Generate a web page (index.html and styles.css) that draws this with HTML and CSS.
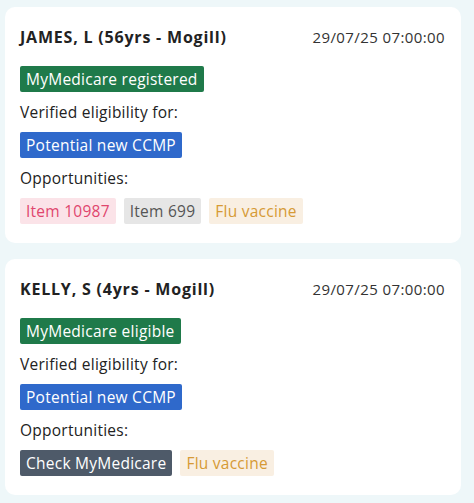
FILE: index.html
```html
<!DOCTYPE html>
<html lang="en">
<head>
    <meta charset="UTF-8">
    <meta name="viewport" content="width=device-width, initial-scale=1.0">
    <title>Patients</title>
    <link rel="stylesheet" href="styles.css">
</head>
<body>
    <div class="list">
        <div class="card">
            <div class="card-head">
                <span class="name">JAMES, L (56yrs - Mogill)</span>
                <span class="date">29/07/25 07:00:00</span>
            </div>
            <div class="tags">
                <span class="tag tag-green">MyMedicare registered</span>
            </div>
            <div class="label">Verified eligibility for:</div>
            <div class="tags">
                <span class="tag tag-blue">Potential new CCMP</span>
            </div>
            <div class="label">Opportunities:</div>
            <div class="tags">
                <span class="tag tag-pink">Item 10987</span>
                <span class="tag tag-grey">Item 699</span>
                <span class="tag tag-flu">Flu vaccine</span>
            </div>
        </div>
        <div class="card">
            <div class="card-head">
                <span class="name">KELLY, S (4yrs - Mogill)</span>
                <span class="date">29/07/25 07:00:00</span>
            </div>
            <div class="tags">
                <span class="tag tag-green">MyMedicare eligible</span>
            </div>
            <div class="label">Verified eligibility for:</div>
            <div class="tags">
                <span class="tag tag-blue">Potential new CCMP</span>
            </div>
            <div class="label">Opportunities:</div>
            <div class="tags">
                <span class="tag tag-slate">Check MyMedicare</span>
                <span class="tag tag-flu">Flu vaccine</span>
            </div>
        </div>
    </div>
</body>
</html>
```

FILE: styles.css
```css
body {
    margin: 0;
    padding: 0;
    background-color: #eef7f9;
    font-family: 'Open Sans', sans-serif;
    color: #222;
}

.list {
    display: flex;
    flex-direction: column;
    gap: 16px;
    padding: 7px 13px 7px 5px;
}

.card {
    background-color: #fff;
    border-radius: 10px;
    padding: 18px 16px 19px 15px;
}

.card-head {
    display: flex;
    justify-content: space-between;
    align-items: center;
    height: 24px;
    margin-bottom: 17px;
}

.name {
    font-size: 16px;
    font-weight: 700;
    letter-spacing: 0.8px;
    color: #222;
}

.date {
    font-size: 15px;
    letter-spacing: 0.4px;
    color: #333;
}

.tags {
    display: flex;
    gap: 8px;
}

.tag {
    display: inline-block;
    height: 26px;
    line-height: 26px;
    padding: 0 6px;
    border-radius: 2px;
    font-size: 15.5px;
    letter-spacing: 0.25px;
}

.tag-green {
    background-color: #1f7a4a;
    color: #fff;
}

.tag-blue {
    background-color: #2f69cb;
    color: #fff;
}

.tag-pink {
    background-color: #fbe3e8;
    color: #e0466e;
}

.tag-grey {
    background-color: #e6e6e6;
    color: #555;
}

.tag-flu {
    background-color: #f9efe2;
    color: #d69a35;
}

.tag-slate {
    background-color: #4e5a69;
    color: #fff;
}

.label {
    font-size: 15.5px;
    font-weight: 500;
    letter-spacing: 0.25px;
    line-height: 24px;
    margin: 8px 0;
}
```
